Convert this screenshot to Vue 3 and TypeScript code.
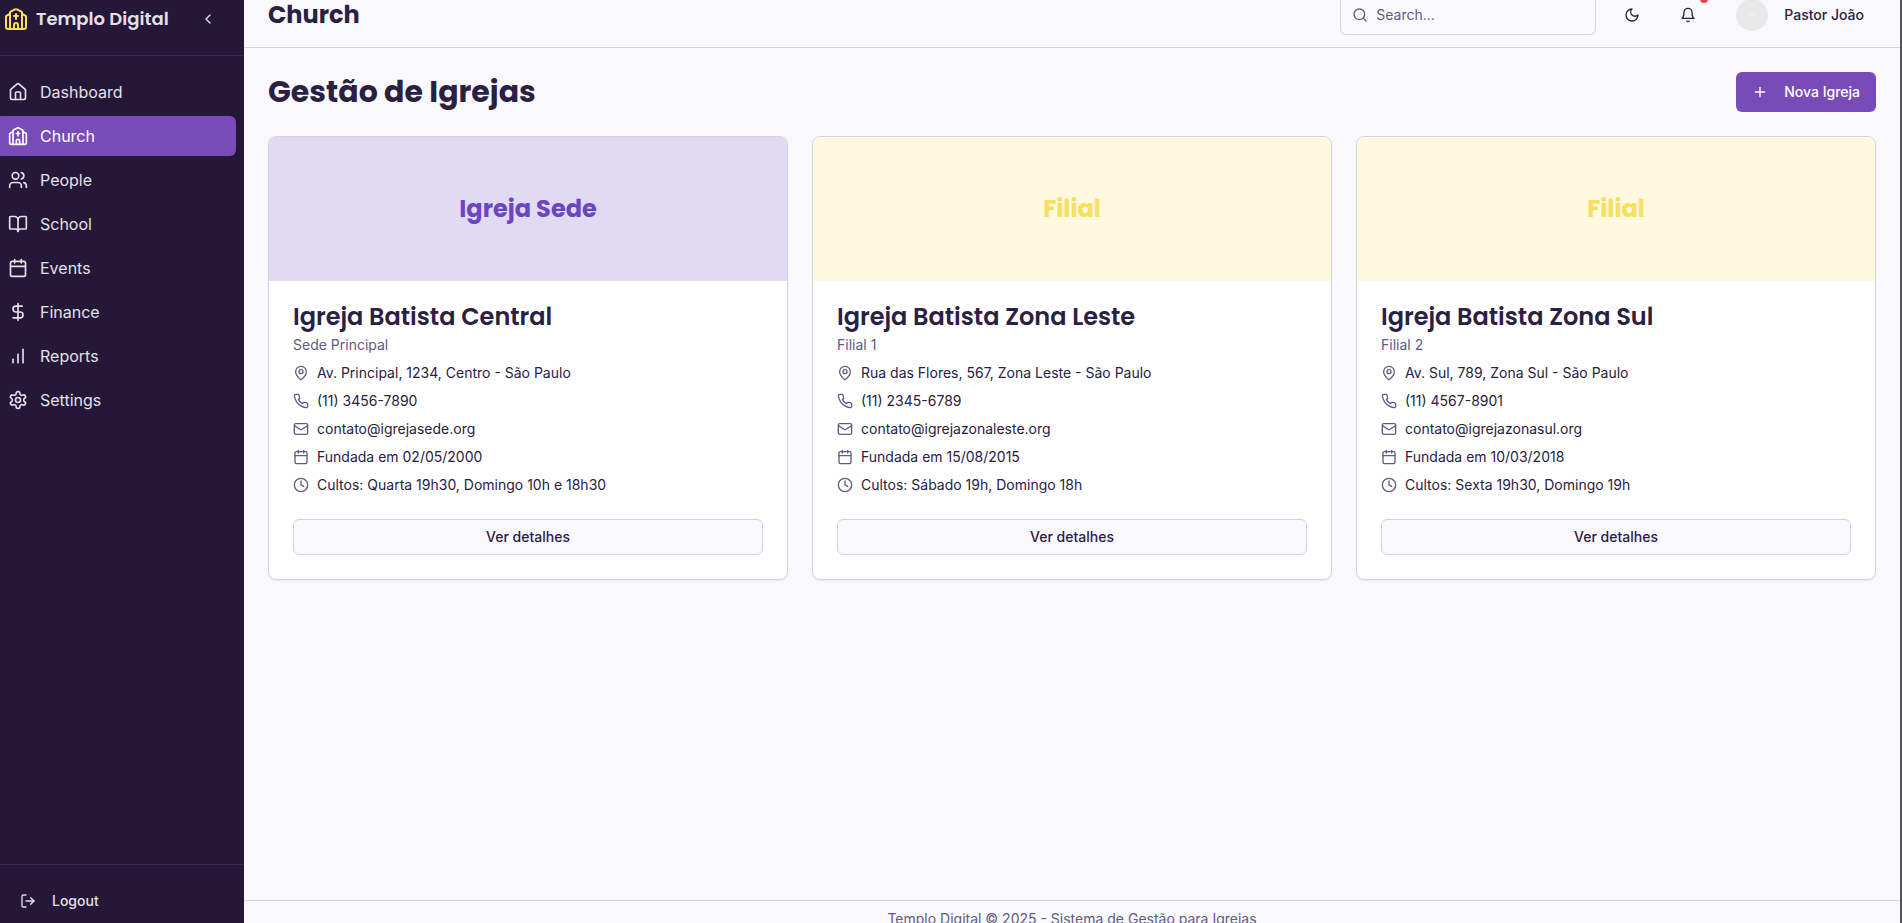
<script setup lang="ts">
import { ref } from 'vue'

const icons: Record<string, string[]> = {
  church: [
    'M10 9h4',
    'M12 7v5',
    'M14 22v-4a2 2 0 0 0-4 0v4',
    'M18 22V5.618a1 1 0 0 0-.553-.894l-4.553-2.277a2 2 0 0 0-1.788 0L6.553 4.724A1 1 0 0 0 6 5.618V22',
    'm18 7 3.447 1.724a1 1 0 0 1 .553.894V20a2 2 0 0 1-2 2H4a2 2 0 0 1-2-2V9.618a1 1 0 0 1 .553-.894L6 7',
  ],
  chevron: ['m15 18-6-6 6-6'],
  home: [
    'M15 21v-8a1 1 0 0 0-1-1h-4a1 1 0 0 0-1 1v8',
    'M3 10a2 2 0 0 1 .709-1.528l7-5.999a2 2 0 0 1 2.582 0l7 5.999A2 2 0 0 1 21 10v9a2 2 0 0 1-2 2H5a2 2 0 0 1-2-2z',
  ],
  users: [
    'M16 21v-2a4 4 0 0 0-4-4H6a4 4 0 0 0-4 4v2',
    'M5 7a4 4 0 1 0 8 0a4 4 0 1 0-8 0',
    'M22 21v-2a4 4 0 0 0-3-3.87',
    'M16 3.13a4 4 0 0 1 0 7.75',
  ],
  book: [
    'M12 7v14',
    'M3 18a1 1 0 0 1-1-1V4a1 1 0 0 1 1-1h5a4 4 0 0 1 4 4 4 4 0 0 1 4-4h5a1 1 0 0 1 1 1v13a1 1 0 0 1-1 1h-6a3 3 0 0 0-3 3 3 3 0 0 0-3-3z',
  ],
  calendar: [
    'M8 2v4',
    'M16 2v4',
    'M5 4h14a2 2 0 0 1 2 2v14a2 2 0 0 1-2 2H5a2 2 0 0 1-2-2V6a2 2 0 0 1 2-2z',
    'M3 10h18',
  ],
  dollar: ['M12 2v20', 'M17 5H9.5a3.5 3.5 0 0 0 0 7h5a3.5 3.5 0 0 1 0 7H6'],
  chart: ['M12 20V10', 'M18 20V4', 'M6 20v-4'],
  settings: [
    'M12.22 2h-.44a2 2 0 0 0-2 2v.18a2 2 0 0 1-1 1.73l-.43.25a2 2 0 0 1-2 0l-.15-.08a2 2 0 0 0-2.73.73l-.22.38a2 2 0 0 0 .73 2.73l.15.1a2 2 0 0 1 1 1.72v.51a2 2 0 0 1-1 1.74l-.15.09a2 2 0 0 0-.73 2.73l.22.38a2 2 0 0 0 2.73.73l.15-.08a2 2 0 0 1 2 0l.43.25a2 2 0 0 1 1 1.73V20a2 2 0 0 0 2 2h.44a2 2 0 0 0 2-2v-.18a2 2 0 0 1 1-1.73l.43-.25a2 2 0 0 1 2 0l.15.08a2 2 0 0 0 2.73-.73l.22-.39a2 2 0 0 0-.73-2.73l-.15-.08a2 2 0 0 1-1-1.74v-.5a2 2 0 0 1 1-1.74l.15-.09a2 2 0 0 0 .73-2.73l-.22-.38a2 2 0 0 0-2.73-.73l-.15.08a2 2 0 0 1-2 0l-.43-.25a2 2 0 0 1-1-1.73V4a2 2 0 0 0-2-2z',
    'M9 12a3 3 0 1 0 6 0a3 3 0 1 0-6 0',
  ],
  logout: ['M9 21H5a2 2 0 0 1-2-2V5a2 2 0 0 1 2-2h4', 'm16 17 5-5-5-5', 'M21 12H9'],
  search: ['M3 11a8 8 0 1 0 16 0a8 8 0 1 0-16 0', 'm21 21-4.3-4.3'],
  moon: ['M12 3a6 6 0 0 0 9 9 9 9 0 1 1-9-9Z'],
  bell: ['M6 8a6 6 0 0 1 12 0c0 7 3 9 3 9H3s3-2 3-9', 'M10.3 21a1.94 1.94 0 0 0 3.4 0'],
  plus: ['M5 12h14', 'M12 5v14'],
  pin: [
    'M20 10c0 4.993-5.539 10.193-7.399 11.799a1 1 0 0 1-1.202 0C9.539 20.193 4 14.993 4 10a8 8 0 0 1 16 0',
    'M9 10a3 3 0 1 0 6 0a3 3 0 1 0-6 0',
  ],
  phone: [
    'M22 16.92v3a2 2 0 0 1-2.18 2 19.79 19.79 0 0 1-8.63-3.07 19.5 19.5 0 0 1-6-6 19.79 19.79 0 0 1-3.07-8.67A2 2 0 0 1 4.11 2h3a2 2 0 0 1 2 1.72 12.84 12.84 0 0 0 .7 2.81 2 2 0 0 1-.45 2.11L8.09 9.91a16 16 0 0 0 6 6l1.27-1.27a2 2 0 0 1 2.11-.45 12.84 12.84 0 0 0 2.81.7A2 2 0 0 1 22 16.92z',
  ],
  mail: [
    'M4 4h16a2 2 0 0 1 2 2v12a2 2 0 0 1-2 2H4a2 2 0 0 1-2-2V6a2 2 0 0 1 2-2z',
    'm22 7-8.97 5.7a1.94 1.94 0 0 1-2.06 0L2 7',
  ],
  clock: ['M2 12a10 10 0 1 0 20 0a10 10 0 1 0-20 0', 'M12 6v6l4 2'],
}

const navItems = [
  { label: 'Dashboard', icon: 'home' },
  { label: 'Church', icon: 'church' },
  { label: 'People', icon: 'users' },
  { label: 'School', icon: 'book' },
  { label: 'Events', icon: 'calendar' },
  { label: 'Finance', icon: 'dollar' },
  { label: 'Reports', icon: 'chart' },
  { label: 'Settings', icon: 'settings' },
]

interface Church {
  banner: string
  main: boolean
  name: string
  kind: string
  details: { icon: string; text: string }[]
}

function details(address: string, phone: string, mail: string, founded: string, services: string) {
  return [
    { icon: 'pin', text: address },
    { icon: 'phone', text: phone },
    { icon: 'mail', text: mail },
    { icon: 'calendar', text: `Fundada em ${founded}` },
    { icon: 'clock', text: `Cultos: ${services}` },
  ]
}

const churches: Church[] = [
  {
    banner: 'Igreja Sede',
    main: true,
    name: 'Igreja Batista Central',
    kind: 'Sede Principal',
    details: details('Av. Principal, 1234, Centro - São Paulo', '(11) 3456-7890', 'contato@igrejasede.org', '02/05/2000', 'Quarta 19h30, Domingo 10h e 18h30'),
  },
  {
    banner: 'Filial',
    main: false,
    name: 'Igreja Batista Zona Leste',
    kind: 'Filial 1',
    details: details('Rua das Flores, 567, Zona Leste - São Paulo', '(11) 2345-6789', 'contato@igrejazonaleste.org', '15/08/2015', 'Sábado 19h, Domingo 18h'),
  },
  {
    banner: 'Filial',
    main: false,
    name: 'Igreja Batista Zona Sul',
    kind: 'Filial 2',
    details: details('Av. Sul, 789, Zona Sul - São Paulo', '(11) 4567-8901', 'contato@igrejazonasul.org', '10/03/2018', 'Sexta 19h30, Domingo 19h'),
  },
]

const active = ref('Church')
const query = ref('')
</script>

<template>
  <div class="shell">
    <aside class="sidebar">
      <div class="brand">
        <svg class="icon logo" viewBox="0 0 24 24"><path v-for="d in icons.church" :key="d" :d="d" /></svg>
        <span class="brand-name">Templo Digital</span>
        <button class="icon-button" type="button" aria-label="Collapse sidebar">
          <svg class="icon small" viewBox="0 0 24 24"><path v-for="d in icons.chevron" :key="d" :d="d" /></svg>
        </button>
      </div>
      <nav class="nav">
        <a
          v-for="item in navItems"
          :key="item.label"
          href="#"
          class="nav-link"
          :class="{ active: active === item.label }"
          @click.prevent="active = item.label"
        >
          <svg class="icon" viewBox="0 0 24 24"><path v-for="d in icons[item.icon]" :key="d" :d="d" /></svg>
          <span>{{ item.label }}</span>
        </a>
      </nav>
      <div class="sidebar-foot">
        <button class="logout" type="button">
          <svg class="icon small" viewBox="0 0 24 24"><path v-for="d in icons.logout" :key="d" :d="d" /></svg>
          <span>Logout</span>
        </button>
      </div>
    </aside>

    <div class="page">
      <header class="topbar">
        <h1 class="topbar-title">Church</h1>
        <label class="search">
          <svg class="icon small" viewBox="0 0 24 24"><path v-for="d in icons.search" :key="d" :d="d" /></svg>
          <input v-model="query" type="search" placeholder="Search..." aria-label="Search" />
        </label>
        <button class="icon-button" type="button" aria-label="Toggle theme">
          <svg class="icon small" viewBox="0 0 24 24"><path v-for="d in icons.moon" :key="d" :d="d" /></svg>
        </button>
        <button class="icon-button" type="button" aria-label="Notifications">
          <svg class="icon small" viewBox="0 0 24 24"><path v-for="d in icons.bell" :key="d" :d="d" /></svg>
          <span class="dot"></span>
        </button>
        <button class="user" type="button">
          <span class="avatar"></span>
          <span>Pastor João</span>
        </button>
      </header>

      <main class="content">
        <div class="heading">
          <h2 class="heading-title">Gestão de Igrejas</h2>
          <button class="primary" type="button">
            <svg class="icon small" viewBox="0 0 24 24"><path v-for="d in icons.plus" :key="d" :d="d" /></svg>
            <span>Nova Igreja</span>
          </button>
        </div>
        <div class="cards">
          <article v-for="church in churches" :key="church.name" class="card">
            <div class="banner" :class="{ main: church.main }">{{ church.banner }}</div>
            <div class="card-body">
              <h3 class="card-title">{{ church.name }}</h3>
              <p class="card-kind">{{ church.kind }}</p>
              <ul class="details">
                <li v-for="row in church.details" :key="row.icon">
                  <svg class="icon small" viewBox="0 0 24 24"><path v-for="d in icons[row.icon]" :key="d" :d="d" /></svg>
                  <span>{{ row.text }}</span>
                </li>
              </ul>
              <button class="outline" type="button">Ver detalhes</button>
            </div>
          </article>
        </div>
      </main>

      <footer class="footer">Templo Digital © 2025 - Sistema de Gestão para Igrejas</footer>
    </div>
  </div>
</template>

<style>
body {
  margin: 0;
  height: 100vh;
  overflow: hidden;
  background: #f9f9fc;
}
#app {
  height: 100%;
  overflow: hidden;
}
</style>

<style scoped>
.shell {
  --heading: Poppins, Inter, 'Open Sans', sans-serif;
  --ink: #2b2042;
  --muted: #635a82;
  --line: #d5d3e0;
  display: flex;
  box-sizing: border-box;
  height: calc(100vh + 31px);
  margin: -17px 0 0 -12px;
  border-right: 2px solid #54555c;
  font: 14px/20px Inter, 'Noto Sans', sans-serif;
  color: var(--ink);
}
.shell * {
  box-sizing: border-box;
}
button {
  border: 0;
  padding: 0;
  background: none;
  color: inherit;
  font: inherit;
  font-weight: 500;
  cursor: pointer;
}
h1,
h2,
h3,
p,
ul {
  margin: 0;
  padding: 0;
}
.icon {
  flex: none;
  width: 20px;
  height: 20px;
  fill: none;
  stroke: currentColor;
  stroke-width: 2;
  stroke-linecap: round;
  stroke-linejoin: round;
}
.icon.small {
  width: 16px;
  height: 16px;
}
.icon.logo {
  width: 24px;
  height: 24px;
  color: #f6e05e;
}
.sidebar {
  flex: none;
  display: flex;
  flex-direction: column;
  width: 256px;
  background: #251737;
  color: #e3e0ea;
}
.brand {
  display: flex;
  align-items: center;
  gap: 8px;
  padding: 16px;
  border-bottom: 1px solid #3b2a55;
}
.brand-name {
  flex: 1;
  font: 600 18px/28px var(--heading);
  white-space: nowrap;
}
.icon-button {
  position: relative;
  flex: none;
  display: flex;
  align-items: center;
  justify-content: center;
  width: 40px;
  height: 40px;
}
.nav {
  flex: 1;
  display: flex;
  flex-direction: column;
  gap: 4px;
  padding: 16px 8px;
}
.nav-link {
  display: flex;
  align-items: center;
  gap: 12px;
  height: 40px;
  padding: 0 12px;
  border-radius: 6px;
  color: inherit;
  font-size: 16px;
  line-height: 24px;
  text-decoration: none;
}
.nav-link.active {
  background: #794bb8;
  color: #fff;
}
.sidebar-foot {
  padding: 16px;
  border-top: 1px solid #3b2a55;
}
.logout {
  display: flex;
  align-items: center;
  gap: 16px;
  width: 100%;
  height: 40px;
  padding: 0 16px;
}
.page {
  flex: 1;
  min-width: 0;
  display: flex;
  flex-direction: column;
  background: #f9f9fc;
}
.topbar {
  display: flex;
  align-items: center;
  gap: 16px;
  height: 65px;
  padding: 0 24px;
  border-bottom: 1px solid var(--line);
}
.topbar-title {
  flex: 1;
  font: 700 24px/32px var(--heading);
}
.search {
  display: flex;
  align-items: center;
  gap: 8px;
  width: 256px;
  height: 40px;
  padding: 0 11px;
  border: 1px solid var(--line);
  border-radius: 6px;
  color: var(--muted);
}
.search input {
  flex: 1;
  min-width: 0;
  padding: 0;
  border: 0;
  outline: 0;
  background: none;
  font: inherit;
  color: var(--ink);
}
.search input::placeholder {
  color: var(--muted);
  opacity: 1;
}
.dot {
  position: absolute;
  top: 0;
  right: 0;
  width: 8px;
  height: 8px;
  border-radius: 50%;
  background: #f04444;
}
.user {
  display: flex;
  align-items: center;
  gap: 16px;
  height: 40px;
  padding: 0 12px;
}
.avatar {
  width: 32px;
  height: 32px;
  border-radius: 50%;
  background: radial-gradient(circle, #eeeeee 0 2px, #e9e9e9 4px);
}
.content {
  flex: 1;
  display: flex;
  flex-direction: column;
  gap: 24px;
  padding: 24px;
}
.heading {
  display: flex;
  align-items: center;
  justify-content: space-between;
}
.heading-title {
  font: 700 30px/36px var(--heading);
}
.primary {
  display: flex;
  align-items: center;
  gap: 16px;
  height: 40px;
  padding: 0 16px;
  border-radius: 6px;
  background: #794bb8;
  color: #fff;
}
.cards {
  display: grid;
  grid-template-columns: repeat(3, 1fr);
  gap: 24px;
}
.card {
  overflow: hidden;
  border: 1px solid var(--line);
  border-radius: 8px;
  background: #fff;
  box-shadow: 0 1px 2px rgba(0, 0, 0, 0.06);
}
.banner {
  display: flex;
  align-items: center;
  justify-content: center;
  height: 144px;
  background: #fdf8de;
  color: #f6e05e;
  font: 700 24px/32px var(--heading);
}
.banner.main {
  background: #e0daf2;
  color: #6b46c1;
}
.card-body {
  display: flex;
  flex-direction: column;
  padding: 24px;
}
.card-title {
  font: 600 24px/24px var(--heading);
}
.card-kind {
  margin-top: 6px;
  color: var(--muted);
}
.details {
  display: flex;
  flex-direction: column;
  gap: 8px;
  margin: 8px 0 24px;
  list-style: none;
}
.details li {
  display: flex;
  align-items: center;
  gap: 8px;
}
.details .icon {
  color: var(--muted);
}
.outline {
  height: 36px;
  border: 1px solid var(--line);
  border-radius: 6px;
  background: #f9f9fc;
}
.footer {
  padding: 8px 24px;
  border-top: 1px solid var(--line);
  color: var(--muted);
  text-align: center;
}
</style>
